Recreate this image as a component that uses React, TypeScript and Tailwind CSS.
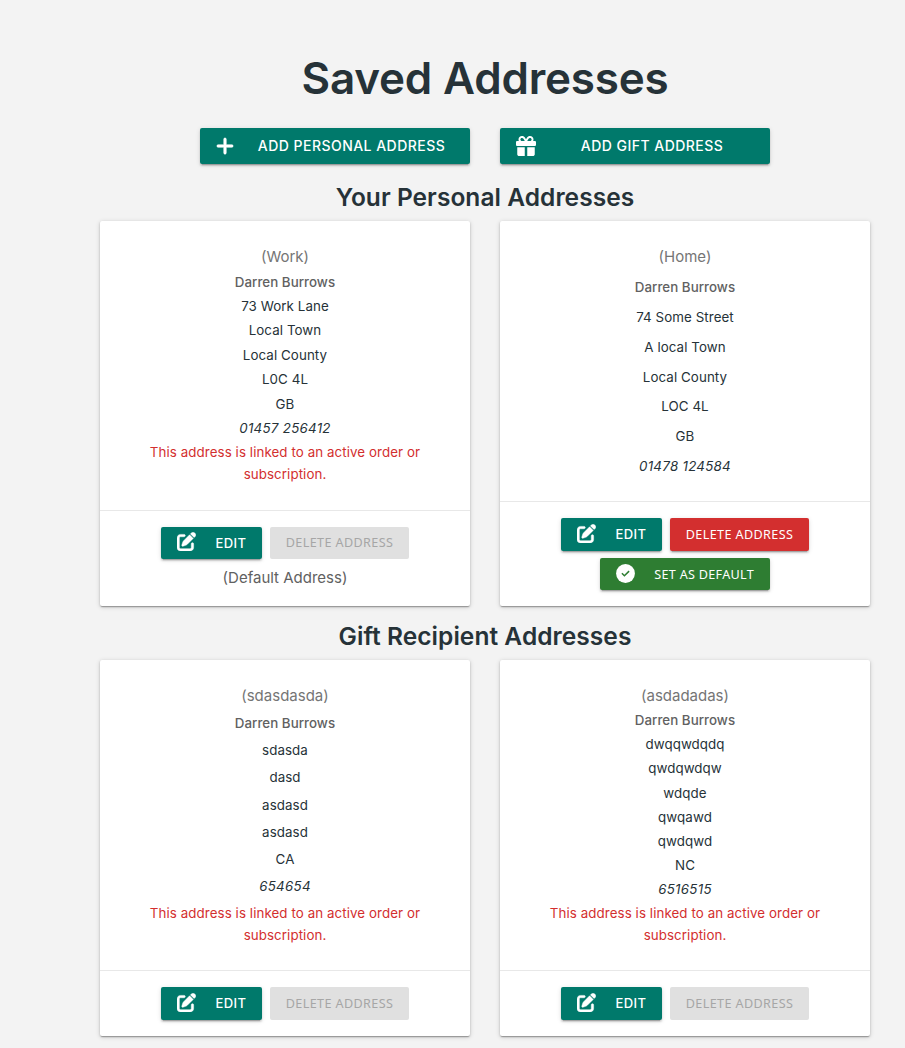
import React from 'react';
import { FaGift, FaPenToSquare, FaPlus } from 'react-icons/fa6';

const elevation =
  'shadow-[0px_3px_1px_-2px_rgba(0,0,0,0.2),0px_2px_2px_0px_rgba(0,0,0,0.14),0px_1px_5px_0px_rgba(0,0,0,0.12)]';

const cardElevation =
  'shadow-[0px_2px_1px_-1px_rgba(0,0,0,0.2),0px_1px_2px_0px_rgba(0,0,0,0.2),0px_1px_5px_0px_rgba(0,0,0,0.16)]';

type Address = {
  label: string;
  name: string;
  lines: string[];
  phone: string;
  linked?: boolean;
  status?: 'default' | 'selectable';
};

const personal: Address[] = [
  {
    label: 'Work',
    name: 'Darren Burrows',
    lines: ['73 Work Lane', 'Local Town', 'Local County', 'L0C 4L', 'GB'],
    phone: '01457 256412',
    linked: true,
    status: 'default',
  },
  {
    label: 'Home',
    name: 'Darren Burrows',
    lines: ['74 Some Street', 'A local Town', 'Local County', 'LOC 4L', 'GB'],
    phone: '01478 124584',
    status: 'selectable',
  },
];

const gifts: Address[] = [
  {
    label: 'sdasdasda',
    name: 'Darren Burrows',
    lines: ['sdasda', 'dasd', 'asdasd', 'asdasd', 'CA'],
    phone: '654654',
    linked: true,
  },
  {
    label: 'asdadadas',
    name: 'Darren Burrows',
    lines: ['dwqqwdqdq', 'qwdqwdqw', 'wdqde', 'qwqawd', 'qwdqwd', 'NC'],
    phone: '6516515',
    linked: true,
  },
];

function CheckCircle() {
  return (
    <svg viewBox="0 0 19 19" className="-ml-[0.5px] size-[19px]" aria-hidden="true">
      <circle cx="9.5" cy="9.5" r="9.4" fill="#fff" />
      <path d="M5.9 9.3 8.4 11.7 13.1 7.1" fill="none" stroke="#2e7d32" strokeWidth="1.5" />
    </svg>
  );
}

function AddButton({ icon, children }: { icon: React.ReactNode; children: React.ReactNode }) {
  return (
    <button
      className={`flex h-9 w-[270px] items-center rounded-[2px] bg-[#00796b] px-4 pb-px text-[14px] font-medium tracking-[0.47px] text-white ${elevation}`}
    >
      {icon}
      <span className="ml-3.5 flex-1 text-center">{children}</span>
    </button>
  );
}

function AddressCard({ address }: { address: Address }) {
  return (
    <article className={`flex w-[370px] flex-col rounded-[2px] bg-white ${cardElevation}`}>
      <div className="flex flex-1 flex-col justify-between px-6 pt-[24.2px] pb-6 text-center text-[13.33px] leading-[22px] tracking-[0.08px] text-[#263238]">
        <p className="text-[15px] leading-[23px] tracking-normal text-[#757575]">({address.label})</p>
        <p className="font-medium tracking-[0.03px] text-[#616161]">{address.name}</p>
        {address.lines.map((line, i) => (
          <p key={i}>{line}</p>
        ))}
        <p className="tracking-[0.28px] italic">{address.phone}</p>
        {address.linked && (
          <p className="px-6 text-[#d32f2f]">This address is linked to an active order or subscription.</p>
        )}
      </div>
      <div className="flex min-h-[66px] flex-col items-center gap-[7px] border-t border-[#e8e8e8] py-4 text-[13px] tracking-[0.46px]">
        <div className="flex gap-2">
          <button
            className={`flex h-[32.5px] w-[101px] items-center justify-between rounded-[2px] bg-[#00796b] pr-[15.5px] pl-4 font-medium text-white ${elevation}`}
          >
            <FaPenToSquare className="size-[19px] -translate-y-px stroke-white stroke-[12]" />
            <span className="pt-px">EDIT</span>
          </button>
          <button
            disabled={address.linked}
            className={`h-[32.5px] w-[139px] rounded-[2px] pt-0.5 font-['Noto_Sans',sans-serif] text-[12.6px] tracking-[0.38px] ${
              address.linked ? 'bg-[#e0e0e0] text-[#a6a6a6]' : `bg-[#d32f2f] text-white ${elevation}`
            }`}
          >
            DELETE ADDRESS
          </button>
        </div>
        {address.status === 'default' && (
          <p className="h-6 text-[15px] leading-6 tracking-normal text-[#616161]">(Default Address)</p>
        )}
        {address.status === 'selectable' && (
          <button
            className={`flex h-[32.5px] w-[170px] items-center justify-between rounded-[2px] bg-[#2e7d32] px-4 font-['Noto_Sans',sans-serif] text-[12.6px] tracking-[0.3px] text-white ${elevation}`}
          >
            <CheckCircle />
            <span className="pt-[3px]">SET AS DEFAULT</span>
          </button>
        )}
      </div>
    </article>
  );
}

export default function App() {
  return (
    <main className="flex h-[1048px] flex-col items-center overflow-hidden bg-[#f3f3f3] pl-[65px] font-['Inter',sans-serif] text-[#263238]">
      <h1 className="mt-[50px] text-[44px] leading-[56px] font-semibold tracking-[-0.2px]">Saved Addresses</h1>
      <div className="mt-[22px] flex gap-[30px]">
        <AddButton icon={<FaPlus className="-ml-px size-5 stroke-white stroke-[14]" />}>ADD PERSONAL ADDRESS</AddButton>
        <AddButton icon={<FaGift className="size-5" />}>ADD GIFT ADDRESS</AddButton>
      </div>
      <h2 className="mt-[17px] text-[24.5px] leading-8 font-semibold tracking-[0.05px]">Your Personal Addresses</h2>
      <div className="mt-2 flex h-[385px] shrink-0 gap-[30px]">
        {personal.map((address) => (
          <AddressCard key={address.label} address={address} />
        ))}
      </div>
      <h2 className="mt-[14px] text-[24.5px] leading-8 font-semibold tracking-[0.05px]">Gift Recipient Addresses</h2>
      <div className="mt-2 flex h-[376px] shrink-0 gap-[30px]">
        {gifts.map((address) => (
          <AddressCard key={address.label} address={address} />
        ))}
      </div>
    </main>
  );
}
